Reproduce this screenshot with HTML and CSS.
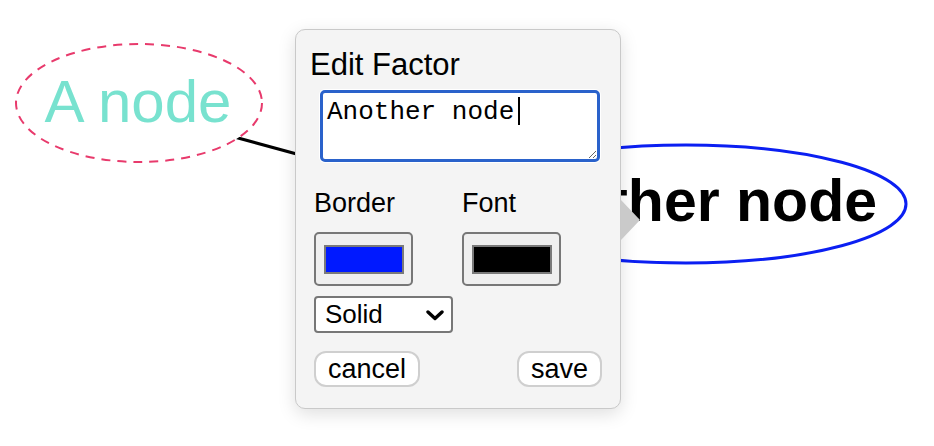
FILE: index.html
```html
<!DOCTYPE html>
<html>
<head>
<meta charset="utf-8">
<link rel="stylesheet" href="styles.css">
</head>
<body>
<div class="canvas">
  <svg class="graph" width="934" height="446" viewBox="0 0 934 446">
    <line x1="139" y1="111" x2="480" y2="204" stroke="#000" stroke-width="3"/>
    <ellipse cx="139" cy="103" rx="123" ry="59" fill="#fff" stroke="#e83a6c" stroke-width="2" stroke-dasharray="9 7"/>
    <text x="138" y="122" class="label-a" text-anchor="middle">A node</text>
    <ellipse cx="686" cy="204" rx="220" ry="59" fill="#fff" stroke="#0b1ff2" stroke-width="3"/>
    <text x="877" y="221" class="label-b" text-anchor="end">Another node</text>
  </svg>

  <div class="popover">
    <div class="title">Edit Factor</div>
    <div class="ta-wrap">
      <textarea class="ta" spellcheck="false">Another node</textarea>
      <span class="caret"></span>
    </div>
    <div class="colors">
      <div class="col">
        <div class="lbl">Border</div>
        <div class="cbtn"><span class="sw sw-blue"></span></div>
      </div>
      <div class="col">
        <div class="lbl">Font</div>
        <div class="cbtn"><span class="sw sw-black"></span></div>
      </div>
    </div>
    <div class="select">
      <span>Solid</span>
      <svg class="chev" width="18" height="11" viewBox="0 0 18 11"><path d="M2 2 L9 8.5 L16 2" fill="none" stroke="#000" stroke-width="3.4" stroke-linecap="round" stroke-linejoin="round"/></svg>
    </div>
    <div class="actions">
      <div class="btn">cancel</div>
      <div class="btn">save</div>
    </div>
    <span class="arrow"></span>
  </div>
</div>
</body>
</html>
```

FILE: styles.css
```css
html, body {
  margin: 0;
  padding: 0;
  background: #fff;
}
body {
  width: 934px;
  height: 446px;
  overflow: hidden;
  font-family: "Liberation Sans", Arial, sans-serif;
}
.canvas {
  position: relative;
  width: 934px;
  height: 446px;
}
.graph {
  position: absolute;
  left: 0;
  top: 0;
}
.label-a {
  font-family: "Liberation Sans", Arial, sans-serif;
  font-size: 60px;
  fill: #78e2cf;
}
.label-b {
  font-family: "Liberation Sans", Arial, sans-serif;
  font-size: 59px;
  font-weight: bold;
  fill: #000;
}
.popover {
  position: absolute;
  left: 295px;
  top: 29px;
  width: 326px;
  height: 380px;
  box-sizing: border-box;
  background: #f4f4f4;
  border: 1px solid #c9c9c9;
  border-radius: 10px;
  box-shadow: 0 5px 18px rgba(0, 0, 0, 0.13);
  padding: 18px 18px 20px 18px;
  display: flex;
  flex-direction: column;
}
.title {
  font-size: 31px;
  line-height: 34px;
  margin-left: -4px;
  color: #000;
}
.ta-wrap {
  position: relative;
  margin-top: 8px;
  margin-left: 6px;
  width: 280px;
  height: 72px;
}
.ta {
  display: block;
  width: 280px;
  height: 72px;
  box-sizing: border-box;
  margin: 0;
  border: 3px solid #2a62cb;
  border-radius: 5px;
  box-shadow: 0 0 0 1px #fff;
  outline: none;
  background: #fff;
  padding: 4px 4px 2px 4px;
  font-family: "Liberation Mono", "Courier New", monospace;
  font-size: 26px;
  color: #000;
  resize: both;
  overflow: hidden;
}
.caret {
  position: absolute;
  left: 198px;
  top: 7px;
  width: 2px;
  height: 28px;
  background: #000;
}
.colors {
  display: flex;
  margin-top: 26px;
}
.col {
  flex: none;
  width: 148px;
  display: flex;
  flex-direction: column;
}
.col + .col {
  width: 140px;
}
.lbl {
  font-size: 27px;
  line-height: 30px;
  color: #000;
}
.cbtn {
  margin-top: 14px;
  width: 99px;
  height: 54px;
  box-sizing: border-box;
  border: 2px solid #777;
  border-radius: 5px;
  background: #efefef;
  display: flex;
  align-items: center;
  justify-content: center;
}
.sw {
  display: block;
  width: 80px;
  height: 29px;
  box-sizing: border-box;
  border: 2px solid #7a7a7a;
}
.sw-blue { background: #0019ff; }
.sw-black { background: #000; }
.select {
  margin-top: 10px;
  width: 139px;
  height: 37px;
  box-sizing: border-box;
  border: 2px solid #777;
  border-radius: 4px;
  background: #fff;
  display: flex;
  align-items: center;
  justify-content: space-between;
  padding: 0 7px 0 9px;
  font-size: 26px;
  color: #000;
}
.chev {
  display: block;
  margin-top: 1px;
}
.actions {
  margin-top: 18px;
  display: flex;
  justify-content: space-between;
}
.btn {
  height: 36px;
  box-sizing: border-box;
  border: 2px solid #cfcfcf;
  border-radius: 12px;
  background: #fff;
  padding: 0 12px;
  font-size: 27px;
  line-height: 32px;
  color: #000;
}
.arrow {
  position: absolute;
  right: -20px;
  top: 170px;
  width: 0;
  height: 0;
  border-left: 19px solid #cacaca;
  border-top: 20px solid transparent;
  border-bottom: 20px solid transparent;
}
```
